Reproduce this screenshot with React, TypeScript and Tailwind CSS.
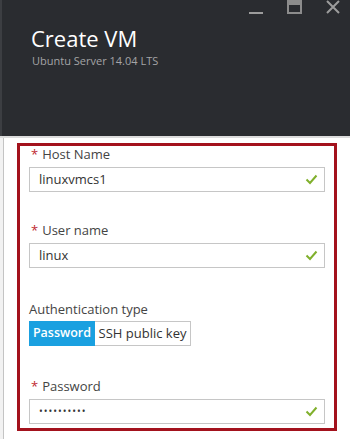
import React from "react"

const font = { fontFamily: '"Open Sans", "Noto Sans", sans-serif' }

function Check() {
  return (
    <svg width="13" height="11" viewBox="0 0 13 11" className="shrink-0">
      <path d="M1.5 5.5 L5 9 L11.5 1.5" fill="none" stroke="#80b02c" strokeWidth="2" />
    </svg>
  )
}

function Label({ text }: { text: string }) {
  return (
    <div className="flex items-center gap-[4px] h-[14px] leading-[14px] text-[13px] text-[#444]">
      <span className="text-[#c0282f] text-[13px] pl-[2px]">*</span>
      <span>{text}</span>
    </div>
  )
}

function Field({ label, value }: { label: string; value: string }) {
  return (
    <div className="flex flex-col">
      <Label text={label} />
      <div className="mt-[6px] flex items-center justify-between h-[25px] border border-[#c6c6c6] pl-[9px] pr-[6px] text-[13px] text-[#333]">
        <span>{value}</span>
        <Check />
      </div>
    </div>
  )
}

export default function App() {
  return (
    <div className="w-[350px] h-[439px] flex flex-col bg-[#f2f2f2] overflow-hidden" style={font}>
      {/* dark blade header */}
      <div className="h-[136px] bg-[#2a2c30] flex flex-col shrink-0 border-l-[2px] border-[#3c3e42]">
        <div className="flex justify-end items-start gap-[24px] pr-[10px] h-[16px]">
          <div className="mt-[12px] w-[14px] h-[2px] bg-[#9c9c9c]" />
          <div className="w-[15px] h-[14px] border-[2px] border-[#8c8c8c] border-t-[5px]" />
          <svg width="14" height="14" viewBox="0 0 14 14">
            <path d="M1 1 L13 13 M13 1 L1 13" stroke="#9c9c9c" strokeWidth="2" />
          </svg>
        </div>
        <div className="pl-[29px] mt-[9px] text-[22px] leading-[26px] text-white">Create VM</div>
        <div className="pl-[30px] mt-[3px] text-[11px] leading-[14px] text-[#a4a4a6]">Ubuntu Server 14.04 LTS</div>
      </div>
      <div className="h-[2px] bg-[#dcdcdc] shrink-0" />
      {/* form body */}
      <div className="flex-1 ml-[3px] border-l border-[#c4c4c4] bg-white pt-[5px] pl-[13px]">
        <div className="w-[320px] border-[3px] border-[#a3121d] flex flex-col pl-[9px] pr-[9px] pt-[1px] pb-[4px]">
          <Field label="Host Name" value="linuxvmcs1" />
          <div className="h-[31px]" />
          <Field label="User name" value="linux" />
          <div className="mt-[34px] h-[14px] leading-[14px] text-[13px] text-[#444]">Authentication type</div>
          <div className="mt-[5px] flex h-[25px] text-[13px]">
            <div className="w-[66px] bg-[#1aa0e0] text-white text-[12.5px] font-semibold flex items-center justify-center">Password</div>
            <div className="w-[96px] border border-l-0 border-[#c6c6c6] text-[#333] flex items-center justify-center">SSH public key</div>
          </div>
          <div className="h-[33px]" />
          <div className="flex flex-col">
            <Label text="Password" />
            <div className="mt-[6px] flex items-center justify-between h-[25px] border border-[#c6c6c6] pl-[9px] pr-[6px] text-[#333]">
              <span className="text-[10px] tracking-[1px]">••••••••••</span>
              <Check />
            </div>
          </div>
        </div>
      </div>
    </div>
  )
}
